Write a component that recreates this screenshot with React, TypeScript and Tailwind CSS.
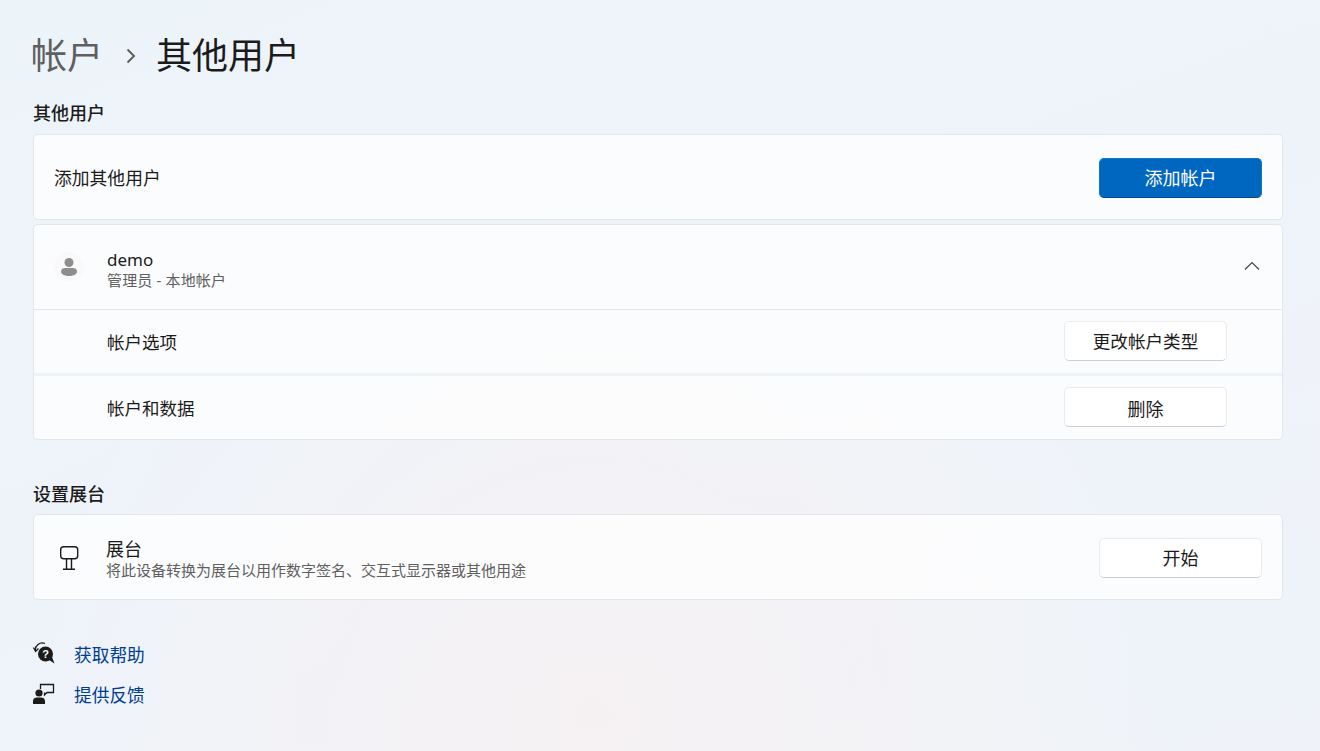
import React from "react";

const font = '"Noto Sans","Noto Sans CJK SC",sans-serif';

function Btn({ children, primary, wide, low }: { children: React.ReactNode; primary?: boolean; wide?: boolean; low?: boolean }) {
  return (
    <button
      className={
        primary
          ? "w-[163px] h-[40px] rounded-[5px] bg-[#0067c0] border border-[#1473c5] border-b-[#00498c] text-white text-[18px] leading-none"
          : wide
          ? "w-[163px] h-[40px] pt-[2px] rounded-[5px] bg-white border border-[#ebebeb] border-b-[#cfcfcf] text-[#1b1b1b] text-[17.6px] leading-none"
          : low
          ? "w-[163px] h-[40px] pt-[3px] rounded-[5px] bg-white border border-[#ebebeb] border-b-[#cfcfcf] text-[#1b1b1b] text-[18px] leading-none"
          : "w-[163px] h-[40px] rounded-[5px] bg-white border border-[#ebebeb] border-b-[#cfcfcf] text-[#1b1b1b] text-[18px] leading-none"
      }
    >
      {children}
    </button>
  );
}

function Card({ children, className = "" }: { children: React.ReactNode; className?: string }) {
  return <div className={"rounded-[5px] border border-[#e3e7eb] bg-white/75 " + className}>{children}</div>;
}

function Heading({ children }: { children: React.ReactNode }) {
  return <h2 className="text-[18px] leading-[24px] font-medium text-[#1b1b1b]">{children}</h2>;
}

export default function App() {
  return (
    <div
      className="w-[1320px] h-[751px] overflow-hidden pl-[33px] pr-[37px] pt-[32px] bg-[radial-gradient(ellipse_at_45%_95%,#f5f1f3_0%,rgba(245,241,243,0)_55%),radial-gradient(ellipse_at_100%_85%,#eef3f9_0%,rgba(238,243,249,0)_40%),linear-gradient(160deg,#edf4f9_0%,#eef3fa_50%,#f1f3f7_100%)] text-[#1b1b1b]"
      style={{ fontFamily: font }}
    >
      <div className="flex items-center h-[48px] text-[36px] leading-[48px]">
        <span className="text-[#5f5f5f] -ml-[2px]">帐户</span>
        <svg width="12" height="16" viewBox="0 0 12 16" className="ml-[22px] mr-[19px]" fill="none">
          <path d="M2.5 1.5 L9 8 L2.5 14.5" stroke="#5f5f5f" strokeWidth="2" />
        </svg>
        <span className="text-[#1b1b1b]">其他用户</span>
      </div>

      <div className="mt-[21px]">
        <Heading>其他用户</Heading>
      </div>

      <Card className="mt-[9px] h-[86px] pt-[2px] flex items-center justify-between pl-[20px] pr-[20px]">
        <span className="text-[17.8px] pt-[1px]">添加其他用户</span>
        <Btn primary>添加帐户</Btn>
      </Card>

      <Card className="mt-[4px] h-[216px] flex flex-col">
        <div className="h-[84px] flex items-center pl-[20px] pr-[22px] shrink-0">
          <div className="w-[30px] h-[30px] rounded-full bg-[#f9f9f9] flex items-center justify-center mr-[23px]">
            <svg width="16" height="20" viewBox="0 0 16 20" fill="#8e8e8e">
              <circle cx="8" cy="5.5" r="4.5" />
              <path d="M0 14.5 C0 12 2 11 4 11 H12 C14 11 16 12 16 14.5 C16 17.5 12 19 8 19 C4 19 0 17.5 0 14.5 Z" />
            </svg>
          </div>
          <div className="flex-1 flex flex-col pt-[4px]">
            <span className="text-[17px] leading-[22px] text-[#1b1b1b]">demo</span>
            <span className="text-[15px] leading-[19px] tracking-[0.15px] text-[#5f5f5f]">管理员 - 本地帐户</span>
          </div>
          <svg width="16" height="10" viewBox="0 0 16 10" fill="none" className="-mt-[3px]">
            <path d="M1 8.5 L8 1.5 L15 8.5" stroke="#454545" strokeWidth="1.2" />
          </svg>
        </div>
        <div className="h-[64px] pb-[1px] border-t border-[#e3e7eb] flex items-center justify-between pl-[73px] pr-[55px] shrink-0">
          <span className="text-[17.5px] pt-[3px]">帐户选项</span>
          <Btn wide>更改帐户类型</Btn>
        </div>
        <div className="flex-1 pb-[1px] border-t-[3px] border-[#eef3f8] flex items-center justify-between pl-[73px] pr-[55px]">
          <span className="text-[17.5px] pt-[3px]">帐户和数据</span>
          <Btn low>删除</Btn>
        </div>
      </Card>

      <div className="mt-[42px]">
        <Heading>设置展台</Heading>
      </div>

      <Card className="mt-[8px] h-[86px] pt-[2px] flex items-center justify-between pl-[23px] pr-[20px]">
        <div className="flex items-center">
          <svg width="22" height="26" viewBox="0 0 22 26" fill="none" stroke="#1b1b1b" strokeWidth="1.4" className="mr-[27px]">
            <rect x="3.7" y="1.7" width="17" height="12" rx="3" />
            <path d="M9.5 14 V24 M14.5 14 V24 M6 24.3 H18" />
          </svg>
          <div className="flex flex-col pt-[2px]">
            <span className="text-[18px] leading-[22px]">展台</span>
            <span className="text-[15px] leading-[20px] text-[#5f5f5f]">将此设备转换为展台以用作数字签名、交互式显示器或其他用途</span>
          </div>
        </div>
        <Btn>开始</Btn>
      </Card>

      <div className="mt-[35px] flex items-center h-[40px]">
        <svg width="22" height="22" viewBox="0 0 22 22" className="mr-[19px] -mt-[4px]" fill="none">
          <path d="M2.5 9 C1.5 3.5 7 -0.5 12 1.5" stroke="#1b1b1b" strokeWidth="1.3" />
          <path d="M0.5 5.5 L2.6 9.5 L5.5 6.5" stroke="#1b1b1b" strokeWidth="1.3" />
          <circle cx="12.5" cy="12" r="7.5" fill="#1b1b1b" />
          <path d="M16 18 L21.5 21.5 L19 15 Z" fill="#1b1b1b" />
          <text x="12.5" y="16" fontSize="11" fontWeight="700" fill="#fff" textAnchor="middle" fontFamily="Liberation Sans">?</text>
        </svg>
        <a className="text-[17.7px] text-[#003e92]">获取帮助</a>
      </div>
      <div className="flex items-center h-[41px]">
        <svg width="22" height="22" viewBox="0 0 22 22" className="mr-[19px] -mt-[3px]">
          <circle cx="6" cy="10" r="3.6" fill="#1b1b1b" />
          <path d="M0 21 V18 C0 15.5 2 14.5 4 14.5 H8 C10 14.5 12 15.5 12 18 V21 Z" fill="#1b1b1b" />
          <path d="M7.5 6 V1.5 H20.5 V9.5 H14 L11.5 12 V9.5" fill="none" stroke="#1b1b1b" strokeWidth="1.3" />
        </svg>
        <a className="text-[17.7px] text-[#003e92]">提供反馈</a>
      </div>
    </div>
  );
}
